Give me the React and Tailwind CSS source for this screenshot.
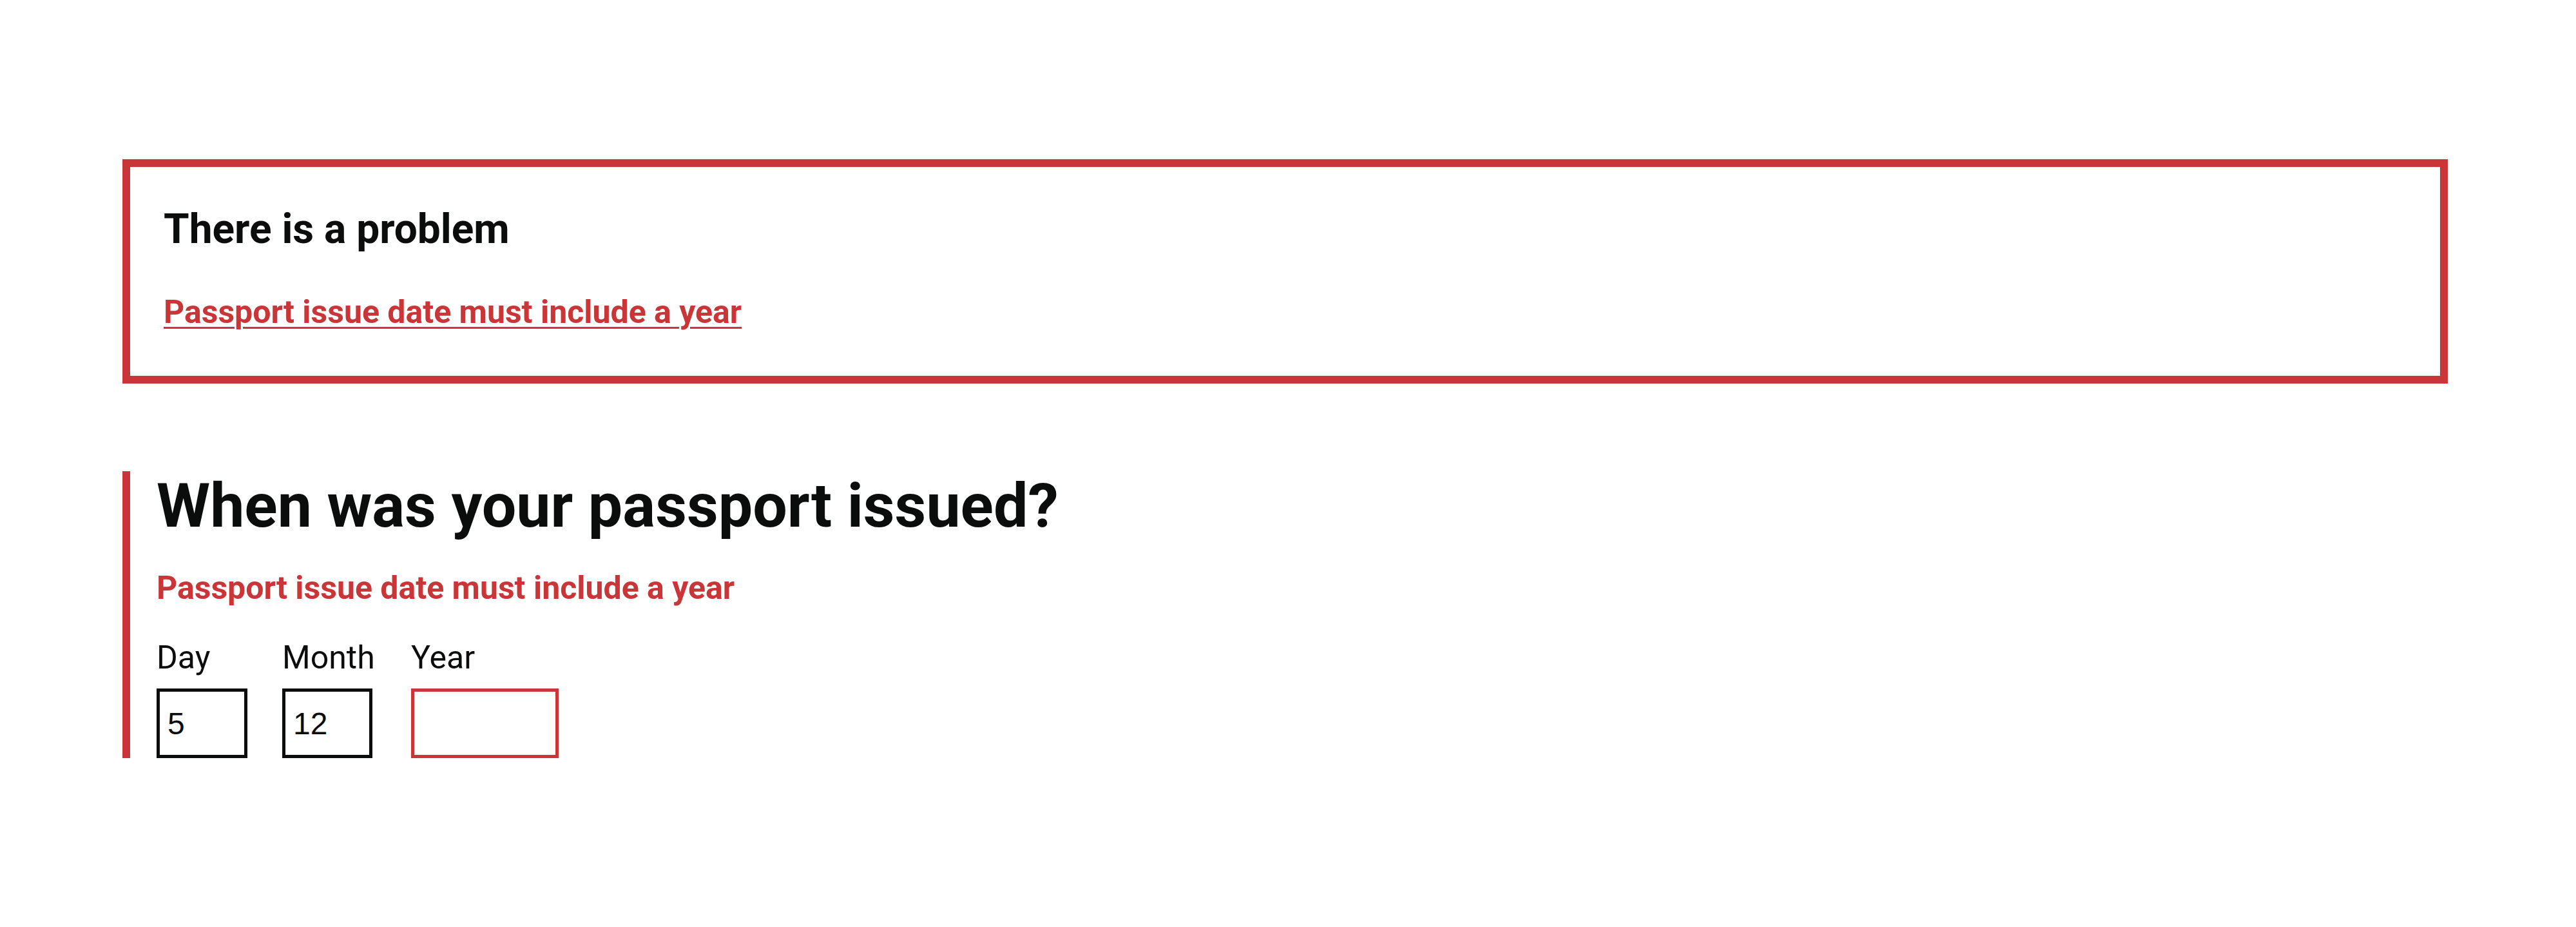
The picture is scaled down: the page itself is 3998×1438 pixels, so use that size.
export default function App() {
    return (
        <div className="min-h-screen bg-white pl-[190px] pr-[199px] pt-[247px] font-['Roboto','Liberation_Sans',sans-serif] text-[#0b0c0c]">
            {/* error summary */}
            <div className="border-[12px] border-[#ca3538] pl-[52px] pr-[52px] pt-[57px] pb-[66px]">
                <h2 className="text-[64px] font-bold leading-[80px]">There is a problem</h2>
                <ul className="mt-[56px]">
                    <li>
                        <a
                            href="#year"
                            className="text-[50px] font-bold leading-[65px] text-[#ca3538] underline decoration-[2.5px] underline-offset-[6px]"
                        >
                            Passport issue date must include a year
                        </a>
                    </li>
                </ul>
            </div>

            {/* date input group */}
            <div className="mt-[136px] border-l-[12px] border-[#ca3538] pl-[41px]">
                <h1 className="text-[95px] font-bold leading-[108px]">When was your passport issued?</h1>
                <p className="mt-[41px] text-[50px] font-bold leading-[65px] text-[#ca3538]">
                    Passport issue date must include a year
                </p>
                <div className="mt-[43px] flex gap-[54px]">
                    <div className="flex flex-col">
                        <label className="text-[50px] leading-[65px]">Day</label>
                        <input
                            defaultValue="5"
                            className="mt-[15px] h-[108px] w-[141px] border-[5px] border-[#0b0c0c] px-[12px] font-['Liberation_Sans',Arial,sans-serif] text-[48px] outline-none"
                        />
                    </div>
                    <div className="flex min-w-[146px] flex-col">
                        <label className="text-[50px] leading-[65px]">Month</label>
                        <input
                            defaultValue="12"
                            className="mt-[15px] h-[108px] w-[140px] border-[5px] border-[#0b0c0c] px-[12px] font-['Liberation_Sans',Arial,sans-serif] text-[48px] outline-none"
                        />
                    </div>
                    <div className="flex flex-col">
                        <label className="text-[50px] leading-[65px]">Year</label>
                        <input
                            id="year"
                            defaultValue=""
                            className="mt-[15px] h-[108px] w-[229px] border-[5px] border-[#ca3538] px-[12px] font-['Liberation_Sans',Arial,sans-serif] text-[48px] outline-none"
                        />
                    </div>
                </div>
            </div>
        </div>
    );
}
